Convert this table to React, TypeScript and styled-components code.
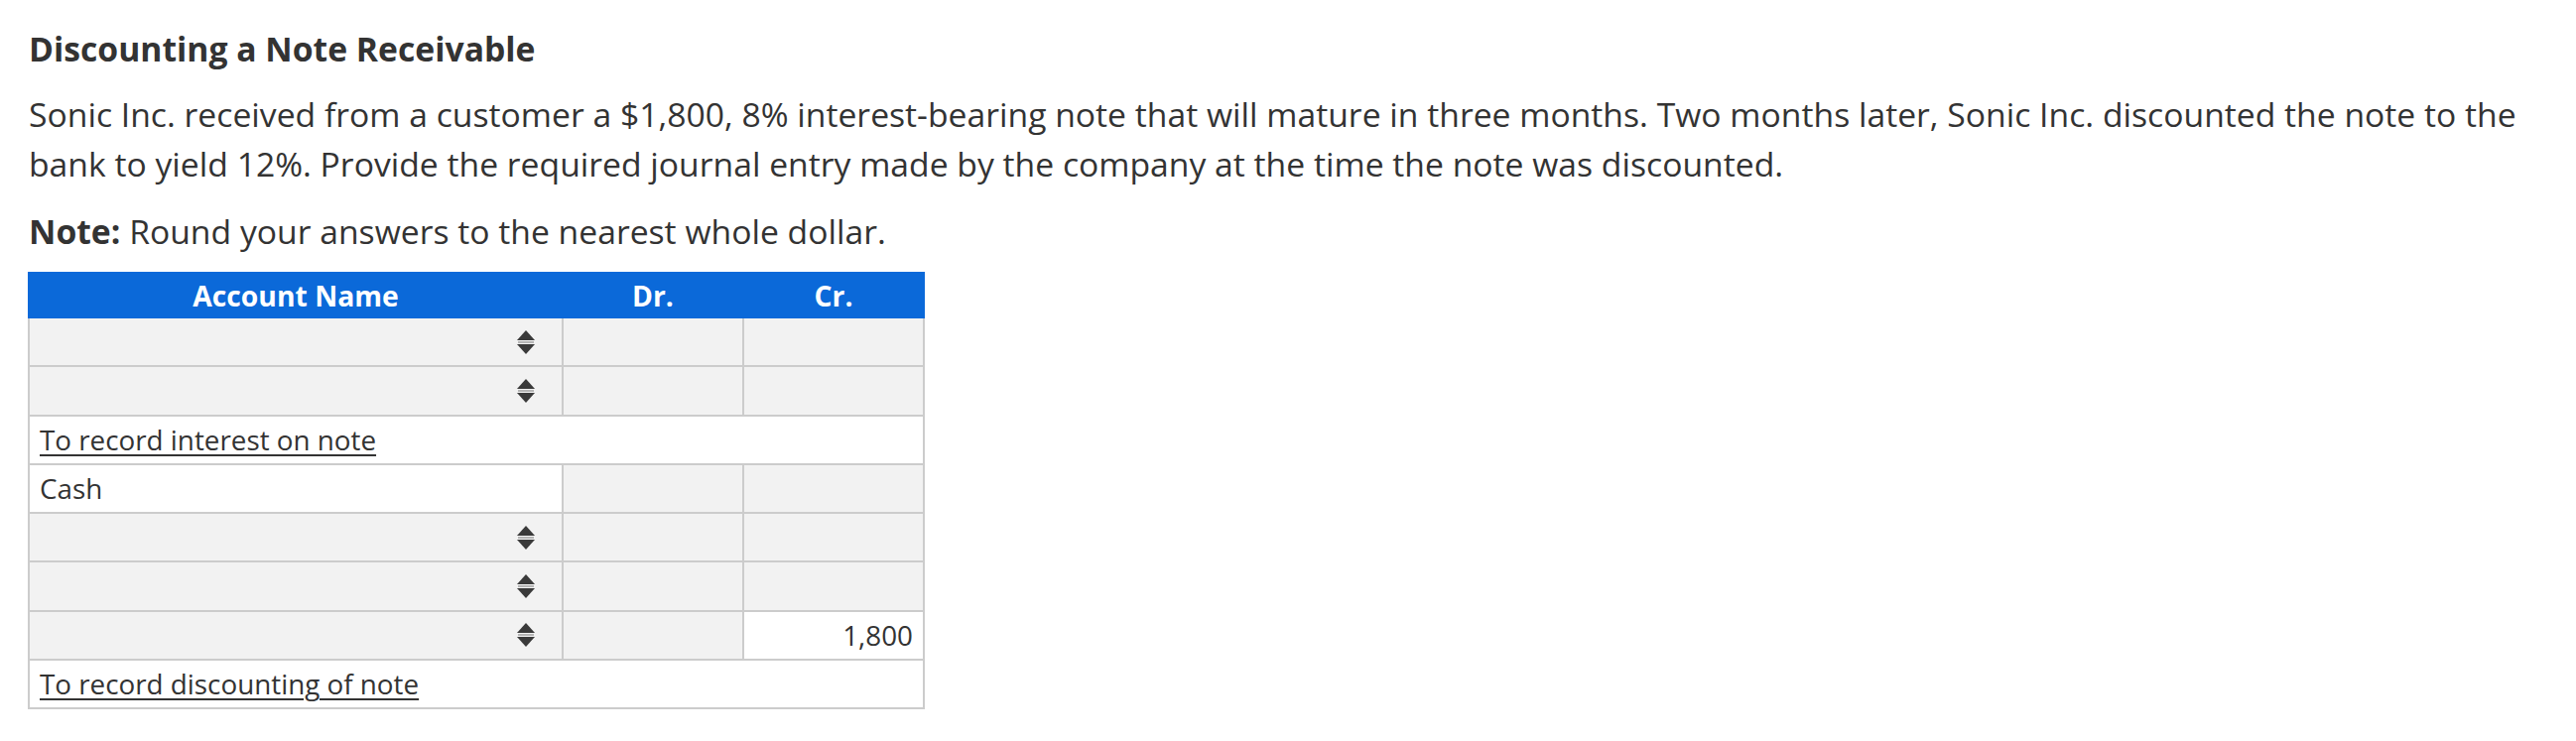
import React from "react";
import styled, { createGlobalStyle } from "styled-components";

const GlobalStyle = createGlobalStyle`
  html, body { margin: 0; padding: 0; background: #ffffff; }
  body { font-family: "Open Sans", "Liberation Sans", sans-serif; color: #333333; }
`;

const Page = styled.div`
  padding: 24px 28px 32px 29px;
  box-sizing: border-box;
  width: 2596px;
`;

const Title = styled.h1`
  margin: 0 0 16px;
  font-size: 33.7px;
  line-height: 50px;
  font-weight: 700;
  color: #333333;
`;

const Para = styled.p<{ $gap?: number }>`
  margin: 0 0 ${(p) => p.$gap ?? 18}px;
  font-size: 33.7px;
  line-height: 50px;
  font-weight: 400;
  color: #333333;
`;

const Strong = styled.strong`
  font-weight: 700;
`;

const Table = styled.div`
  width: 904px;
  margin-left: -1px;
`;

const HeaderRow = styled.div`
  display: grid;
  grid-template-columns: 536px 180px 180px;
  column-gap: 2px;
  padding: 0 2px;
  height: 47px;
  background: #0b69d9;
`;

const HeaderCell = styled.div`
  display: flex;
  align-items: center;
  justify-content: center;
  color: #ffffff;
  font-weight: 700;
  font-size: 28.3px;
`;

const Body = styled.div`
  display: grid;
  grid-template-columns: 536px 180px 180px;
  grid-auto-rows: 47.25px;
  gap: 2px;
  padding: 0 2px 2px;
  background: #cccccc;
`;

const Cell = styled.div<{ $white?: boolean; $align?: "left" | "right"; $span?: boolean }>`
  display: flex;
  align-items: center;
  justify-content: ${(p) => (p.$align === "right" ? "flex-end" : "flex-start")};
  padding: 0 10px;
  background: ${(p) => (p.$white ? "#ffffff" : "#f2f2f2")};
  font-size: 27.8px;
  color: #333333;
  grid-column: ${(p) => (p.$span ? "1 / -1" : "auto")};
`;

const SelectCell = styled(Cell)`
  justify-content: flex-end;
  padding-right: 27px;
`;

const Memo = styled.span`
  text-decoration: underline;
  text-decoration-thickness: 2px;
  text-underline-offset: 4px;
`;

const Arrows = () => (
  <svg width="18" height="24" viewBox="0 0 18 24" aria-hidden="true">
    <polygon points="9,0 18,10 0,10" fill="#3a3a3a" />
    <rect x="1" y="11" width="16" height="2" fill="#b5b5b5" />
    <polygon points="0,14 18,14 9,24" fill="#3a3a3a" />
  </svg>
);

const SelectRow = ({ cr }: { cr?: string }) => (
  <>
    <SelectCell>
      <Arrows />
    </SelectCell>
    <Cell />
    {cr ? (
      <Cell $white $align="right">
        {cr}
      </Cell>
    ) : (
      <Cell />
    )}
  </>
);

export default function App() {
  return (
    <>
      <GlobalStyle />
      <Page>
        <Title>Discounting a Note Receivable</Title>
        <Para>
          Sonic Inc. received from a customer a $1,800, 8% interest-bearing note that will mature in three months.
          Two months later, Sonic Inc. discounted the note to the bank to yield 12%. Provide the required journal
          entry made by the company at the time the note was discounted.
        </Para>
        <Para $gap={16}>
          <Strong>Note:</Strong> Round your answers to the nearest whole dollar.
        </Para>
        <Table>
          <HeaderRow>
            <HeaderCell>Account Name</HeaderCell>
            <HeaderCell>Dr.</HeaderCell>
            <HeaderCell>Cr.</HeaderCell>
          </HeaderRow>
          <Body>
            <SelectRow />
            <SelectRow />
            <Cell $white $span>
              <Memo>To record interest on note</Memo>
            </Cell>
            <Cell $white>Cash</Cell>
            <Cell />
            <Cell />
            <SelectRow />
            <SelectRow />
            <SelectRow cr="1,800" />
            <Cell $white $span>
              <Memo>To record discounting of note</Memo>
            </Cell>
          </Body>
        </Table>
      </Page>
    </>
  );
}
